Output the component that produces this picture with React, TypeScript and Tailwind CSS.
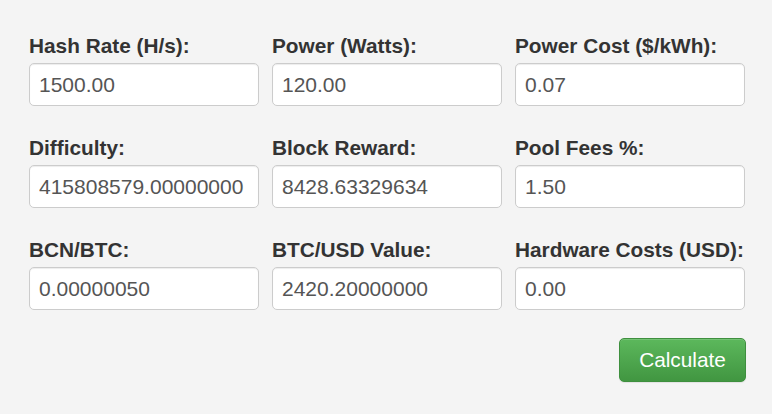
import React, { useState } from 'react'

type FieldType = {
  label: string
  value: string
}

const initialFields: FieldType[] = [
  { label: 'Hash Rate (H/s):', value: '1500.00' },
  { label: 'Power (Watts):', value: '120.00' },
  { label: 'Power Cost ($/kWh):', value: '0.07' },
  { label: 'Difficulty:', value: '415808579.00000000' },
  { label: 'Block Reward:', value: '8428.63329634' },
  { label: 'Pool Fees %:', value: '1.50' },
  { label: 'BCN/BTC:', value: '0.00000050' },
  { label: 'BTC/USD Value:', value: '2420.20000000' },
  { label: 'Hardware Costs (USD):', value: '0.00' },
]

const App = () => {
  const [fields, setFields] = useState<FieldType[]>(initialFields)

  const handleChange = (index: number, value: string) => {
    const updated = [...fields]
    updated[index] = { ...updated[index], value }
    setFields(updated)
  }

  return (
    <div
      className="w-[772px] h-[414px] bg-[#f4f4f4] pl-[29px] pt-[32px]"
      style={{ fontFamily: '"Liberation Sans", Arial, sans-serif' }}
    >
      <div className="w-[716px] grid grid-cols-3 gap-x-[13px] gap-y-[28px]">
        {fields.map((field, index) => (
          <div key={field.label} className="flex flex-col">
            <label className="text-[20.8px] leading-[28px] font-bold text-[#333] mb-[3px] whitespace-nowrap">
              {field.label}
            </label>
            <input
              value={field.value}
              onChange={(e) => handleChange(index, e.target.value)}
              className="h-[43px] w-full pl-[9px] pr-[6px] text-[21px] text-[#555] bg-white border border-[#ccc] rounded-[5px] shadow-[inset_0_1px_1px_rgba(0,0,0,0.075)] outline-none"
            />
          </div>
        ))}
      </div>

      <div className="w-[717px] flex justify-end mt-[28px]">
        <button className="w-[127px] h-[44px] text-[20.8px] text-white rounded-[5px] border border-[#3e8f3e] bg-gradient-to-b from-[#5cb85c] to-[#419641] shadow-[inset_0_1px_0_rgba(255,255,255,0.15),0_1px_1px_rgba(0,0,0,0.075)]">
          Calculate
        </button>
      </div>
    </div>
  )
}

export default App
